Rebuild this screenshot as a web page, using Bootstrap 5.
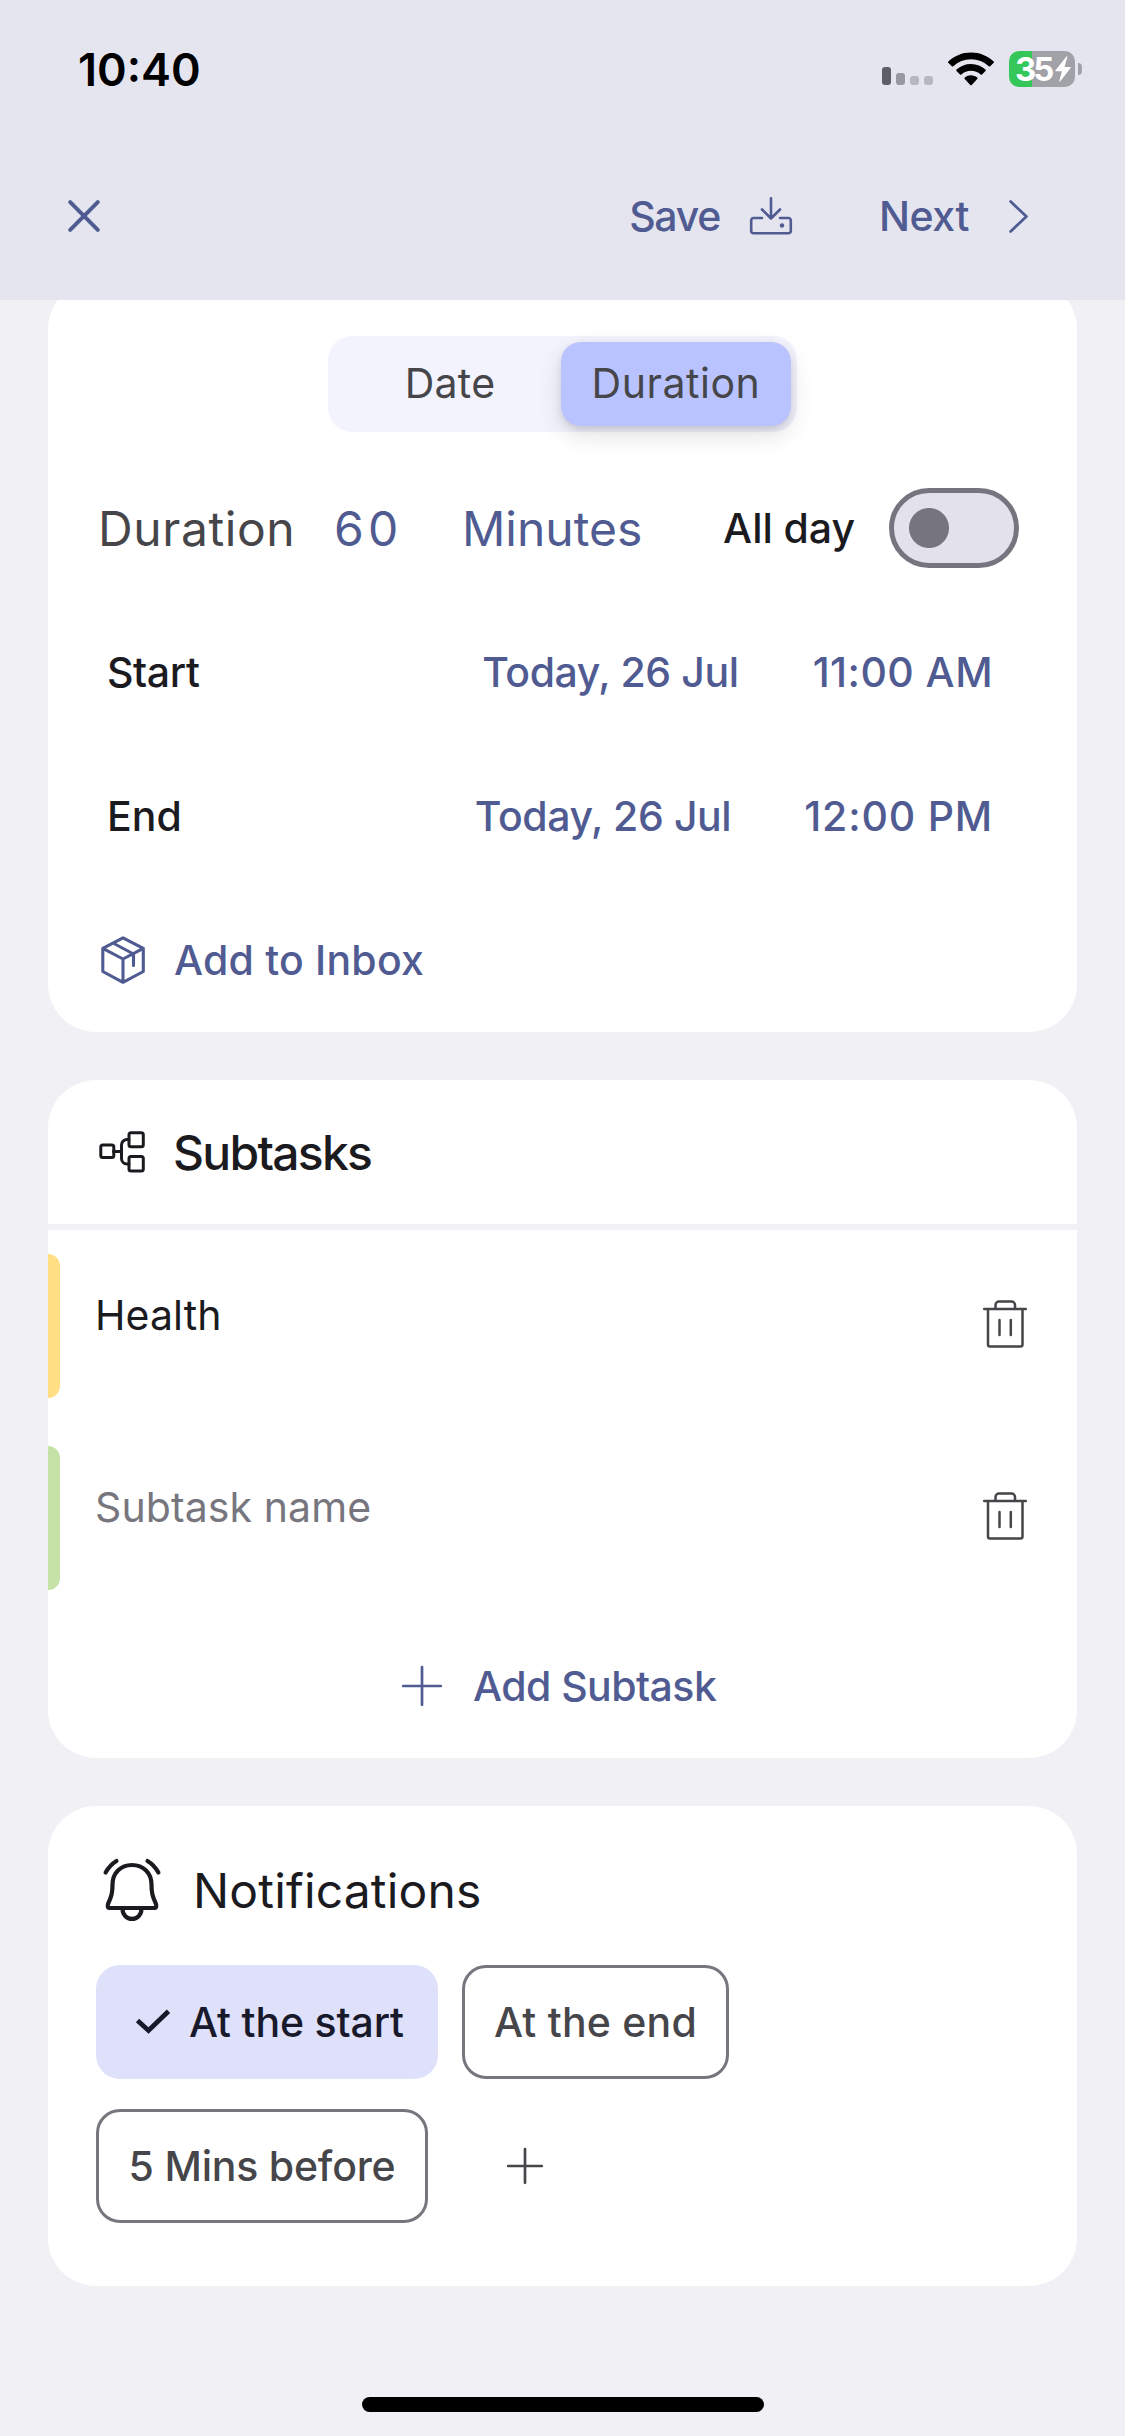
<!DOCTYPE html>
<html lang="en">
<head>
<meta charset="utf-8">
<meta name="viewport" content="width=device-width, initial-scale=1">
<title>Task editor</title>
<link href="https://cdn.jsdelivr.net/npm/bootstrap@5.3.0/dist/css/bootstrap.min.css" rel="stylesheet">
<style>
  :root { --ink: #1b1b1f; --muted: #46464a; --outline: #77767e; --brand: #505b92; }
  body { width: 1125px; height: 2436px; background: #f1f0f5; color: var(--ink); font-family: Inter, "Liberation Sans", sans-serif; font-size: 41px; font-weight: 500; line-height: 1.2; overflow: hidden; }
  svg { display: block; flex: none; overflow: visible; fill: none; stroke: currentColor; stroke-linecap: round; stroke-linejoin: round; }
  svg.solid { stroke: none; fill: currentColor; }
  span, button { white-space: nowrap; }
  .d-flex > span { padding-top: 2px; }
  .plain-btn { border: 0; background: none; padding: 0; color: inherit; font-weight: inherit; }
  .brand { color: var(--brand); }
  .muted { color: var(--muted); }
  .regular { font-weight: 400; }
  .title { font-size: 48px; }

  /* Header */
  .top-area { height: 300px; background: #e5e5ef; z-index: 2; }
  .status-row { height: 138px; padding: 0 43px 0 78px; }
  .clock { font-size: 45px; font-weight: 600; color: #000; }
  .signal { gap: 5px; height: 18px; margin: 13px 15px 0 0; }
  .signal i { width: 9px; border-radius: 3px; background: #b7b7c1; height: 9px; }
  .signal i:nth-child(1) { height: 18px; background: #5e5e66; }
  .signal i:nth-child(2) { height: 12px; background: #9898a1; }
  .wifi { margin: 0 15px 0 0; color: #000; }
  .battery { width: 66px; height: 36px; border-radius: 10px; background: linear-gradient(90deg, #35c759 23px, #a1a1a8 23px); padding: 0 4px 0 6px; color: #fff; }
  .battery > span { font-size: 33px; font-weight: 700; letter-spacing: -3px; line-height: 36px; padding: 0; }
  .nub { width: 4px; height: 12px; margin-left: 3px; border-radius: 0 4px 4px 0; background: #a1a1a8; }
  .app-bar { height: 156px; padding: 0 97px 0 68px; }
  .save-label { letter-spacing: -1.3px; margin-right: 30px; }
  .next-label { letter-spacing: -.43px; margin: 0 40px 0 87px; }

  /* Sections */
  .sheet { margin: 0 48px 48px; background: #fff; border-radius: 48px; overflow: hidden; }
  .sheet-first { margin-top: -19px; padding-top: 55px; }
  .line-row { height: 144px; }
  .segmented { width: 469px; height: 96px; margin: 0 0 24px 280px; padding: 6px; border-radius: 24px; background: #f2f3fd; }
  .segmented .seg { flex: none; color: var(--muted); font-size: 41px; font-weight: 400; line-height: 1.2; height: 84px; padding: 0; border: 0; }
  .segmented .seg-date { width: 227px; padding-left: 5px; letter-spacing: .29px; }
  .segmented .seg-duration { width: 230px; border-radius: 20px; background: #b9c3ff; letter-spacing: .54px; box-shadow: 0 9px 24px rgba(0,0,0,.12), 0 3px 6px rgba(0,0,0,.1); }
  .duration-row { padding: 0 58px 0 50px; }
  .duration-label { letter-spacing: .6px; width: 236px; }
  .duration-value { letter-spacing: 4.2px; width: 128px; }
  .allday { margin-right: 34px; letter-spacing: -.05px; }
  .toggle-track.form-check-input { width: 130px; height: 80px; margin: 0; padding: 0 15px; border: 5px solid #76757f; border-radius: 40px; background: #e3e1ea; background-image: radial-gradient(circle at 35px 35px, #76757f 19.5px, transparent 20.5px); }
  .when-row { padding: 0 84px 0 60px; }
  .when-row > span:first-child { margin-left: -1px; }
  .date-text { letter-spacing: -.4px; }
  .time-am { letter-spacing: .44px; margin-left: 74px; }
  .time-pm { letter-spacing: .8px; margin-left: 73px; }
  .inbox-row { padding-left: 53px; }
  .inbox-row span { margin-left: 29px; letter-spacing: .21px; }

  .sub-head { padding-left: 51px; border-bottom: 6px solid #f2f2f4; height: 150px; }
  .sub-head span { letter-spacing: -1.72px; margin-left: 28px; }
  .sub-item { padding: 24px 50px 24px 0; height: 192px; }
  .tag-bar { width: 12px; height: 144px; border-radius: 0 12px 12px 0; }
  .tag-yellow { background: #ffde84; }
  .tag-green { background: #c5e1a5; }
  .sub-text { margin: 35px 0 0 35px; letter-spacing: .1px; }
  .sub-item svg { margin-top: 46px; }
  .hint { color: var(--outline); }
  .add-sub { padding-left: 354px; }
  .add-sub span { margin-left: 31px; letter-spacing: -.55px; }

  .notif { padding: 0 48px 63px; }
  .notif-head { height: 159px; padding: 9px 0 0 7px; }
  .notif-head span { margin-left: 32px; letter-spacing: .17px; }
  .chip { height: 114px; border: 3px solid var(--outline); border-radius: 24px; color: var(--muted); background: #fff; font-size: 41px; font-weight: 500; padding: 0; line-height: 1; }
  .chip > span { padding: 0; }
  .chip-on { width: 342px; border-color: #dfe0f9; background: #dfe0f9; color: #181a2c; letter-spacing: -.16px; padding-left: 37px; }
  .chip-on svg { margin-right: 19px; stroke-linecap: butt; stroke-linejoin: miter; }
  .chip-end { width: 267px; letter-spacing: .23px; }
  .chip-five { width: 332px; letter-spacing: -.2px; }
  .chip-row { gap: 24px; margin-bottom: 30px; }
  .add-chip { margin-left: 79px; }

  .home-pill { width: 402px; height: 15px; margin: 111px 0 0 362px; border-radius: 8px; background: #000; }
</style>
</head>
<body>
<header class="top-area position-relative">
  <div class="status-row d-flex align-items-center justify-content-between">
    <span class="clock">10:40</span>
    <div class="d-flex align-items-center">
      <div class="signal d-flex align-items-end"><i></i><i></i><i></i><i></i></div>
      <svg class="wifi solid" width="46" height="34" viewBox="0 0 46 34">
        <path d="M23 .5C31.800.5 39.800 3.900 45.700 9.400c.4.4.4 1 0 1.400L42.200 14.200c-.4.4-1 .4-1.400 0A26 26 0 0 0 5.200 14.200c-.4.4-1 .4-1.400 0L.3 10.800c-.4-.4-.4-1 0-1.400C6.200 3.900 14.200.5 23 .5Z"/>
        <path d="M23 12c5.600 0 10.700 2.100 14.500 5.600.4.4.4 1 0 1.400L34 22.400c-.4.4-1 .4-1.400.1a14.200 14.200 0 0 0-19.200 0c-.4.3-1 .3-1.400-.1L8.500 19c-.4-.4-.4-1 0-1.400A21.400 21.400 0 0 1 23 12Z"/>
        <path d="M23 23.300c2.400 0 4.600.9 6.300 2.300.4.400.4 1 0 1.400L23.700 33c-.4.4-1 .4-1.400 0L16.700 27c-.4-.4-.4-1 0-1.400a9.800 9.800 0 0 1 6.300-2.300Z"/>
      </svg>
      <div class="battery d-flex align-items-center justify-content-between">
        <span>35</span>
        <svg class="solid" width="16" height="26" viewBox="0 0 16 26"><path d="M11.500.5.5 14.300c-.4.6-.2 1 .4 1H7L4.300 25c-.2.800.300 1 .8.400L15.600 12c.4-.6.2-1-.4-1H9.500L12.300 1c.2-.800-.3-1-.8-.5Z"/></svg>
      </div>
      <div class="nub"></div>
    </div>
  </div>
  <nav class="app-bar d-flex align-items-center brand">
    <button class="plain-btn" aria-label="Close"><svg width="32" height="32" viewBox="0 0 32 32" stroke-width="4"><path d="M2.200 2.200 29.800 29.800M29.800 2.200 2.200 29.800"/></svg></button>
    <span class="save-label ms-auto">Save</span>
    <svg width="42" height="38" viewBox="0 0 42 38" stroke-width="2.600"><path d="M12 21H3.500A2.200 2.200 0 0 0 1.200 23.200V34a2.200 2.200 0 0 0 2.300 2.300h35A2.200 2.200 0 0 0 40.800 34V23.200A2.200 2.200 0 0 0 38.500 21H30M21 1.200V21.500M12 12.500l9 9 9-9"/><circle cx="32" cy="28.500" r="2.200" fill="currentColor" stroke="none"/></svg>
    <span class="next-label">Next</span>
    <svg width="19" height="33" viewBox="0 0 19 33" stroke-width="2.800"><path d="M1.600 1.600 17.400 16.500 1.600 31.400"/></svg>
  </nav>
</header>

<main>
  <section class="sheet sheet-first">
    <div class="segmented d-flex" role="group">
      <button class="btn seg seg-date">Date</button>
      <button class="btn seg seg-duration">Duration</button>
    </div>
    <div class="line-row duration-row d-flex align-items-center">
      <span class="title regular muted duration-label">Duration</span>
      <span class="title regular brand duration-value">60</span>
      <span class="title regular brand">Minutes</span>
      <span class="allday ms-auto">All day</span>
      <input class="form-check-input toggle-track" type="checkbox" aria-label="All day">
    </div>
    <div class="line-row when-row d-flex align-items-center">
      <span class="me-auto date-text">Start</span>
      <span class="brand date-text">Today, 26 Jul</span>
      <span class="brand time-am">11:00 AM</span>
    </div>
    <div class="line-row when-row d-flex align-items-center">
      <span class="me-auto">End</span>
      <span class="brand date-text">Today, 26 Jul</span>
      <span class="brand time-pm">12:00 PM</span>
    </div>
    <div class="line-row inbox-row d-flex align-items-center brand">
      <svg width="44" height="48" viewBox="0 0 44 48" stroke-width="3.100"><path d="M22 1.800 42.300 12.300V35.500L22 46.300 1.800 35.500V12.300ZM1.800 12.300 22 23 42.300 12.300M22 23V46.300M12 7 32.500 18V29.500"/></svg>
      <span>Add to Inbox</span>
    </div>
  </section>

  <section class="sheet">
    <div class="sub-head d-flex align-items-center">
      <svg width="46" height="42" viewBox="0 0 46 42" stroke-width="3"><rect x="1.800" y="14" width="13" height="12.500" rx="2"/><rect x="30" y="1.800" width="14.300" height="14" rx="2"/><rect x="30" y="25.500" width="14.300" height="14.500" rx="2"/><path d="M14.500 20.500H22.500M30 8.500H28a5.500 5.500 0 0 0-5.500 5.500V27.500a5.500 5.500 0 0 0 5.500 5.500h2"/></svg>
      <span class="title">Subtasks</span>
    </div>
    <div class="sub-item d-flex align-items-start">
      <div class="tag-bar tag-yellow"></div>
      <span class="sub-text regular">Health</span>
      <svg class="ms-auto muted" width="44" height="48" viewBox="0 0 44 48" stroke-width="2.500"><path d="M1.200 9H42.800M5 9V44.500A2 2 0 0 0 7 46.500H37.500a2 2 0 0 0 2-2V9M12.500 9V5a3.500 3.500 0 0 1 3.500-3.500H28.500a3.500 3.500 0 0 1 3.500 3.500V9M16.500 20V35M27.800 20V35"/></svg>
    </div>
    <div class="sub-item d-flex align-items-start">
      <div class="tag-bar tag-green"></div>
      <span class="sub-text regular hint">Subtask name</span>
      <svg class="ms-auto muted" width="44" height="48" viewBox="0 0 44 48" stroke-width="2.500"><path d="M1.200 9H42.800M5 9V44.500A2 2 0 0 0 7 46.500H37.500a2 2 0 0 0 2-2V9M12.500 9V5a3.500 3.500 0 0 1 3.500-3.500H28.500a3.500 3.500 0 0 1 3.500 3.500V9M16.500 20V35M27.800 20V35"/></svg>
    </div>
    <div class="line-row add-sub d-flex align-items-center brand">
      <svg width="40" height="40" viewBox="0 0 40 40" stroke-width="2.700"><path d="M20 1.200V38.800M1.200 20H38.800"/></svg>
      <span>Add Subtask</span>
    </div>
  </section>

  <section class="sheet notif mb-0">
    <div class="notif-head d-flex align-items-center">
      <svg width="58" height="64" viewBox="0 0 58 64" stroke-width="4.200"><path d="M29 7C17.500 7 9.500 15 9.500 26.500c0 8.500-1 12-4.300 19C4.200 48 4.700 50 7 50h44c2.300 0 2.800-2 1.800-4.500-3.300-7-4.300-10.500-4.300-19C48.500 15 40.500 7 29 7ZM19.600 51.500a9.400 9.400 0 0 0 18.800 0M2.600 14.500C5.400 9.500 9 5.700 13.500 3M55.400 14.500C52.600 9.500 49 5.700 44.500 3"/></svg>
      <span class="title regular">Notifications</span>
    </div>
    <div class="chip-row d-flex">
      <button class="chip chip-on d-flex align-items-center">
        <svg width="34" height="26" viewBox="0 0 34 26" stroke-width="4.800"><path d="M1.500 11.500 12.500 21.500 32.500 2.300"/></svg>
        <span>At the start</span>
      </button>
      <button class="chip chip-end">At the end</button>
    </div>
    <div class="d-flex align-items-center">
      <button class="chip chip-five">5 Mins before</button>
      <svg class="muted add-chip" width="36" height="36" viewBox="0 0 36 36" stroke-width="2.700"><path d="M18 1.200V34.800M1.200 18H34.800"/></svg>
    </div>
  </section>
  <div class="home-pill"></div>
</main>
<script src="https://cdn.jsdelivr.net/npm/bootstrap@5.3.0/dist/js/bootstrap.bundle.min.js"></script>
</body>
</html>
